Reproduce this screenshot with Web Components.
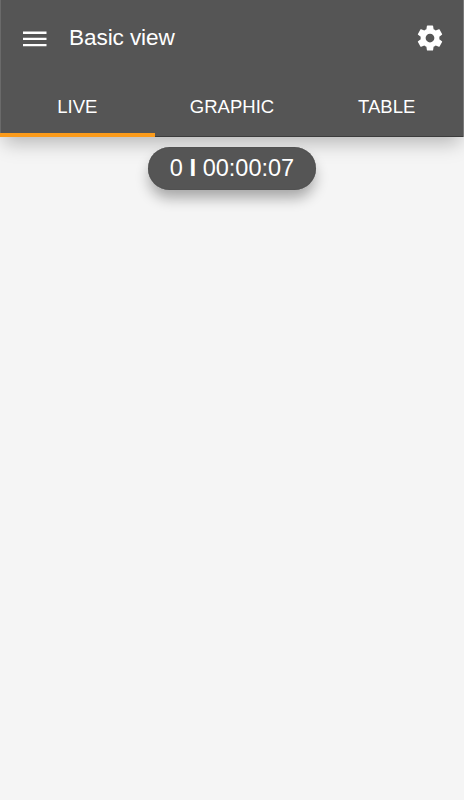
<!DOCTYPE html>
<html lang="en">
<head>
<meta charset="utf-8">
<meta name="viewport" content="width=device-width, initial-scale=1">
<title>Basic view</title>
<style>
  html, body {
    margin: 0;
    height: 100%;
    overflow: hidden;
  }
  body {
    background: #f5f5f5;
    color: #fff;
    font-family: "Liberation Sans", Arial, sans-serif;
  }
</style>
</head>
<body>

<app-view>
  <app-bar slot="header" label="Basic view"></app-bar>
  <tab-bar slot="header">
    <tab-item active>LIVE</tab-item>
    <tab-item>GRAPHIC</tab-item>
    <tab-item>TABLE</tab-item>
  </tab-bar>
  <timer-chip count="0" time="00:00:07"></timer-chip>
</app-view>

<script>
class AppView extends HTMLElement {
  constructor() {
    super();
    this.attachShadow({mode: 'open'});
    this.shadowRoot.innerHTML = `
      <style>
        :host {
          display: flex;
          flex-direction: column;
          height: 100%;
        }
        header {
          box-sizing: border-box;
          height: 137px;
          background: #555;
          border-left: 1px solid #6a6a6a;
          border-right: 1px solid #7a7a7a;
          box-shadow: inset 0 -1px #3c3c3c, 0 10px 18px -4px rgba(0, 0, 0, 0.26);
        }
        main {
          flex: 1;
          display: flex;
          justify-content: center;
          align-items: flex-start;
          padding-top: 10px;
        }
      </style>
      <header><slot name="header"></slot></header>
      <main><slot></slot></main>
    `;
  }
}

class AppBar extends HTMLElement {
  constructor() {
    super();
    this.attachShadow({mode: 'open'});
    this.shadowRoot.innerHTML = `
      <style>
        :host {
          display: flex;
          align-items: center;
          box-sizing: border-box;
          height: 76px;
          padding: 0 18px;
        }
        svg {
          display: block;
          width: 30px;
          height: 30px;
          fill: #fff;
        }
        .menu {
          width: 31px;
          height: 16px;
          margin-top: 1px;
        }
        .title {
          flex: 1;
          margin: 0 0 1px 19px;
          font-size: 22.6px;
          line-height: 26px;
          font-weight: normal;
          letter-spacing: -0.1px;
        }
      </style>
      <svg class="menu" viewBox="0 0 31 16"><path d="M4 .5h23.5v2.4H4zM4 6.7h23.5v2.4H4zM4 12.9h23.5v2.4H4z"/></svg>
      <h1 class="title">${this.getAttribute('label')}</h1>
      <svg viewBox="0 0 24 24"><path d="M19.43 12.98c.04-.32.07-.64.07-.98s-.03-.66-.07-.98l2.11-1.65c.19-.15.24-.42.12-.64l-2-3.46c-.12-.22-.39-.3-.61-.22l-2.49 1c-.52-.4-1.08-.73-1.69-.98l-.38-2.65A.488.488 0 0 0 14 2h-4c-.25 0-.46.18-.49.42l-.38 2.65c-.61.25-1.17.59-1.69.98l-2.49-1c-.23-.09-.49 0-.61.22l-2 3.46c-.13.22-.07.49.12.64l2.11 1.65c-.04.32-.07.65-.07.98s.03.66.07.98l-2.11 1.65c-.19.15-.24.42-.12.64l2 3.46c.12.22.39.3.61.22l2.49-1c.52.4 1.08.73 1.69.98l.38 2.65c.03.24.24.42.49.42h4c.25 0 .46-.18.49-.42l.38-2.65c.61-.25 1.17-.59 1.69-.98l2.49 1c.23.09.49 0 .61-.22l2-3.46c.12-.22.07-.49-.12-.64l-2.11-1.65zM12 15.5c-1.93 0-3.5-1.57-3.5-3.5s1.57-3.5 3.5-3.5 3.5 1.57 3.5 3.5-1.57 3.5-3.5 3.5z"/></svg>
    `;
  }
}

class TabBar extends HTMLElement {
  constructor() {
    super();
    this.attachShadow({mode: 'open'});
    this.shadowRoot.innerHTML = `
      <style>
        :host {
          display: grid;
          grid-template-columns: repeat(3, 1fr);
          height: 61px;
          margin: 0 -1px;
        }
      </style>
      <slot></slot>
    `;
  }
}

class TabItem extends HTMLElement {
  constructor() {
    super();
    this.attachShadow({mode: 'open'});
    this.shadowRoot.innerHTML = `
      <style>
        :host {
          display: flex;
          align-items: center;
          justify-content: center;
          box-sizing: border-box;
          padding-top: 4px;
          border-bottom: 4px solid transparent;
          font-size: 18.5px;
        }
        :host([active]) {
          border-bottom-color: #fb9b1b;
        }
      </style>
      <slot></slot>
    `;
  }
}

class TimerChip extends HTMLElement {
  constructor() {
    super();
    this.attachShadow({mode: 'open'});
    this.shadowRoot.innerHTML = `
      <style>
        :host {
          display: flex;
          align-items: center;
          justify-content: center;
          box-sizing: border-box;
          width: 168px;
          height: 43px;
          padding-bottom: 1px;
          border-radius: 22px;
          background: #555;
          box-shadow: inset 0 0 1px #333, 0 9px 14px -1px rgba(0, 0, 0, 0.32);
          font-size: 23.5px;
          white-space: pre;
        }
        b {
          font-size: 24px;
        }
      </style>
      <span>${this.getAttribute('count')} <b>I</b> ${this.getAttribute('time')}</span>
    `;
  }
}

customElements.define('app-view', AppView);
customElements.define('app-bar', AppBar);
customElements.define('tab-bar', TabBar);
customElements.define('tab-item', TabItem);
customElements.define('timer-chip', TimerChip);
</script>
</body>
</html>
